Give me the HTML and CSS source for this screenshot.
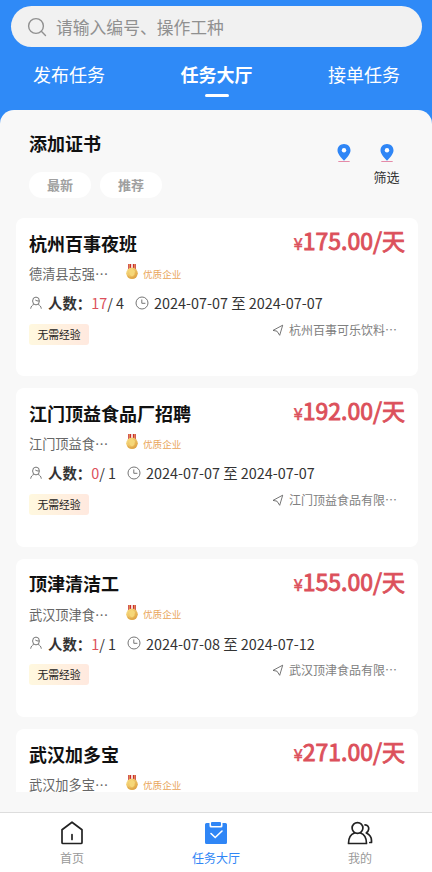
FILE: index.html
```html
<!DOCTYPE html>
<html lang="zh-CN">
<head>
<meta charset="utf-8">
<meta name="viewport" content="width=device-width, initial-scale=1">
<title>任务大厅</title>
<link rel="stylesheet" href="styles.css">
</head>
<body>
<svg class="sprite" aria-hidden="true">
  <linearGradient id="gold" x1="0" y1="0" x2="1" y2="1"><stop offset="0" stop-color="#fbe48c"/><stop offset="1" stop-color="#dc9a35"/></linearGradient>
  <symbol id="pin" viewBox="0 0 16 20"><path d="M8 1C4.200 1 1.500 3.800 1.500 7.300 1.500 11 5 14.500 8 17.700 11 14.500 14.500 11 14.500 7.300 14.500 3.800 11.800 1 8 1Z" fill="#2f86f6"/><circle cx="8" cy="7.200" r="2.200" fill="#fff"/><path d="M2.300 18.500H13.700" stroke="#e58ba8" stroke-width="1"/></symbol>
  <symbol id="medal" viewBox="0 0 14 18"><path d="M3.200 1H6.200V6.500H3.200ZM7.800 1H10.800V6.500H7.800Z" fill="#c9302c"/><path d="M4.400 1H5V6H4.400ZM9 1H9.600V6H9Z" fill="#f3c267"/><circle cx="7" cy="10.300" r="5.800" fill="url(#gold)"/><path d="M4 8 7 5.500 10 8 9.300 12 7 13.500 4.700 12Z" fill="#f6d778"/><path d="M2.500 13Q7 17.200 11.500 13" fill="none" stroke="#dfa54a" stroke-width="1"/></symbol>
  <symbol id="person" viewBox="0 0 14 14"><g fill="none" stroke="#666" stroke-width=".9"><ellipse cx="7" cy="5" rx="3.400" ry="3.900"/><path d="M4.800 8.500C3 9.200 2 10.500 1.700 12.700M9.200 8.500C11 9.200 12 10.500 12.300 12.700M6.300 4Q7.800 5.200 10 5"/></g></symbol>
  <symbol id="clock" viewBox="0 0 14 14"><g fill="none" stroke="#666" stroke-width=".9"><circle cx="7" cy="7" r="6"/><path d="M6.800 3.500V7.300H10.400"/></g></symbol>
  <symbol id="send" viewBox="0 0 12 12"><path d="M10.700 1.200 1 6.400 5 7.200 7.700 11.300Z" fill="none" stroke="#666" stroke-width=".9" stroke-linejoin="round"/></symbol>
</svg>
<div class="app">
  <header class="header">
    <div class="search">
      <svg class="search-icon" viewBox="0 0 20 20"><g fill="none" stroke="#909090" stroke-width="1.400" stroke-linecap="round"><circle cx="9" cy="9" r="7.400"/><path d="M14.300 14.300 18.500 18.500"/></g></svg>
      <span>请输入编号、操作工种</span>
    </div>
    <nav class="tabs">
      <a class="tab">发布任务</a><a class="tab current">任务大厅</a><a class="tab">接单任务</a>
    </nav>
  </header>
  <main class="panel">
    <section class="filters">
      <div>
        <h1 class="heading">添加证书</h1>
        <div class="chips"><span class="chip">最新</span><span class="chip">推荐</span></div>
      </div>
      <div class="tools">
        <div class="tool"><svg class="pin"><use href="#pin"/></svg></div>
        <div class="tool"><svg class="pin"><use href="#pin"/></svg><span>筛选</span></div>
      </div>
    </section>
    <section class="list">
      <article class="card">
        <div class="top"><h2 class="title">杭州百事夜班</h2><div class="price"><small>¥</small>175.00/天</div></div>
        <div class="company"><span class="name">德清县志强⋯</span><svg class="medal"><use href="#medal"/></svg><span class="quality">优质企业</span></div>
        <div class="info"><svg class="mini"><use href="#person"/></svg><b>人数：</b><span class="count">17</span><span>/ 4</span><svg class="mini clock"><use href="#clock"/></svg><span>2024-07-07 至 2024-07-07</span></div>
        <div class="bottom"><span class="tag">无需经验</span><span class="place"><svg class="send"><use href="#send"/></svg>杭州百事可乐饮料⋯</span></div>
      </article>
      <article class="card">
        <div class="top"><h2 class="title">江门顶益食品厂招聘</h2><div class="price"><small>¥</small>192.00/天</div></div>
        <div class="company"><span class="name">江门顶益食⋯</span><svg class="medal"><use href="#medal"/></svg><span class="quality">优质企业</span></div>
        <div class="info"><svg class="mini"><use href="#person"/></svg><b>人数：</b><span class="count">0</span><span>/ 1</span><svg class="mini clock"><use href="#clock"/></svg><span>2024-07-07 至 2024-07-07</span></div>
        <div class="bottom"><span class="tag">无需经验</span><span class="place"><svg class="send"><use href="#send"/></svg>江门顶益食品有限⋯</span></div>
      </article>
      <article class="card">
        <div class="top"><h2 class="title">顶津清洁工</h2><div class="price"><small>¥</small>155.00/天</div></div>
        <div class="company"><span class="name">武汉顶津食⋯</span><svg class="medal"><use href="#medal"/></svg><span class="quality">优质企业</span></div>
        <div class="info"><svg class="mini"><use href="#person"/></svg><b>人数：</b><span class="count">1</span><span>/ 1</span><svg class="mini clock"><use href="#clock"/></svg><span>2024-07-08 至 2024-07-12</span></div>
        <div class="bottom"><span class="tag">无需经验</span><span class="place"><svg class="send"><use href="#send"/></svg>武汉顶津食品有限⋯</span></div>
      </article>
      <article class="card">
        <div class="top"><h2 class="title">武汉加多宝</h2><div class="price"><small>¥</small>271.00/天</div></div>
        <div class="company"><span class="name">武汉加多宝⋯</span><svg class="medal"><use href="#medal"/></svg><span class="quality">优质企业</span></div>
      </article>
    </section>
  </main>
  <footer class="tabbar">
    <a class="item"><svg class="nav-icon" viewBox="0 0 26 26"><path d="M3 9.800 13 2.200 23 9.800V22.500Q23 23.500 22 23.500H4Q3 23.500 3 22.500ZM13 14.500V19.500" fill="none" stroke="#222" stroke-width="1.700" stroke-linejoin="round" stroke-linecap="round"/></svg><span>首页</span></a>
    <a class="item active"><svg class="nav-icon" viewBox="0 0 26 26"><path d="M3.500 3H6.500V6Q6.500 7.500 8 7.500H18Q19.500 7.500 19.500 6V3H22.500Q24 3 24 4.500V22.500Q24 24 22.500 24H3.500Q2 24 2 22.500V4.500Q2 3 3.500 3Z" fill="#2f86f6"/><rect x="8" y="2" width="10" height="4" rx="1" fill="#2f86f6"/><path d="M8 13.500 12.200 17.500 19 11" fill="none" stroke="#fff" stroke-width="1.600" stroke-linecap="round"/></svg><span>任务大厅</span></a>
    <a class="item"><svg class="nav-icon" viewBox="0 0 26 26"><g fill="none" stroke="#222" stroke-width="1.700" stroke-linecap="round" stroke-linejoin="round"><circle cx="10.500" cy="8" r="5.400"/><path d="M7.500 13C3.500 14.300 1.500 17.500 1.500 23.500H19.500C19.500 17.500 17.500 14.300 13.500 13M18 4.800C20.700 5 22 7 21.700 9.200 21.500 11 20.500 12 19.300 13 22.500 14.500 24.500 17.500 24.500 20.500V22.500H22.800"/></g></svg><span>我的</span></a>
  </footer>
</div>
</body>
</html>
```
FILE: styles.css
```css
* { box-sizing: border-box; }
body { margin: 0; background: #f8f8f8; font-family: "Noto Sans CJK SC", sans-serif; color: #333; }
svg { display: block; flex: none; }
h1, h2 { margin: 0; }
.sprite { position: absolute; width: 0; height: 0; }
.app { height: 872px; display: flex; flex-direction: column; overflow: hidden; background: #2f8af7; }
.header { height: 110px; flex: none; padding: 6px 10px 0 11px; }
.search { height: 41px; border-radius: 21px; background: #f1f1f1; display: flex; align-items: center; padding-left: 16px; font-size: 16.800px; color: #909090; white-space: nowrap; }
.search-icon { width: 20px; height: 20px; margin-right: 9px; }
.tabs { display: flex; justify-content: space-between; margin: 13px 22px 0; color: #fff; font-size: 18px; line-height: 28px; }
.tab { display: flex; flex-direction: column; align-items: center; }
.current { font-weight: 700; }
.current::after { content: ""; width: 24px; height: 3px; margin-top: 6px; border-radius: 2px; background: #fff; }
.panel { flex: 1; min-height: 0; display: flex; flex-direction: column; background: #f8f8f8; border-radius: 14px 14px 0 0; padding: 0 14px 20px 16px; }
.filters { height: 108px; flex: none; display: flex; justify-content: space-between; padding: 19px 13px 0; }
.heading { font-size: 18px; line-height: 28px; font-weight: 700; color: #111; }
.chips { display: flex; gap: 9px; margin-top: 15px; }
.chip { width: 62px; height: 26px; border-radius: 13px; background: #fff; color: #a0a0a0; font-size: 13px; font-weight: 700; line-height: 26px; text-align: center; }
.tools { display: flex; gap: 16px; padding: 14px 5px 0 0; }
.tool { width: 27px; display: flex; flex-direction: column; align-items: center; font-size: 13px; line-height: 20px; white-space: nowrap; }
.pin { width: 16px; height: 20px; margin-bottom: 4px; }
.list { flex: 1; min-height: 0; overflow: hidden; display: flex; flex-direction: column; gap: 12px; }
.card { height: 158.400px; flex: none; background: #fff; border-radius: 8px; padding: 7.500px 13px 0; }
.top { height: 34px; display: flex; justify-content: space-between; align-items: center; }
.title { font-size: 18px; line-height: 34px; font-weight: 700; color: #111; }
.price { font-size: 23px; line-height: 30px; font-weight: 400; -webkit-text-stroke: .9px #dc505b; color: #dc505b; white-space: nowrap; padding-bottom: 2px; }
.price small { font-size: 16px; -webkit-text-stroke-width: .6px; }
.company { height: 28px; display: flex; align-items: center; }
.name { width: 96px; font-size: 13.200px; color: #666; }
.medal { width: 14px; height: 18px; margin-right: 4px; margin-top: -3px; }
.quality { font-size: 9.600px; color: #e9a65a; }
.info { height: 30px; display: flex; align-items: center; font-size: 14.400px; white-space: pre; }
.mini { width: 14px; height: 14px; margin-right: 5px; }
.count { color: #dc505b; }
.clock { margin-left: 11px; margin-right: 5px; }
.bottom { display: flex; justify-content: space-between; align-items: flex-start; padding-right: 8px; }
.tag { width: 60px; height: 21px; margin-top: 6px; border-radius: 3px; background: linear-gradient(90deg, #fff8df, #ffe9df); font-size: 10.800px; line-height: 21px; text-align: center; color: #222; }
.place { display: flex; align-items: center; font-size: 12px; line-height: 22px; margin-top: 1px; color: #808080; }
.send { width: 12px; height: 12px; margin-right: 5px; }
.tabbar { height: 60px; flex: none; border-top: 1px solid #ddd; background: #fff; display: flex; }
.item { flex: 1; display: flex; flex-direction: column; align-items: center; padding-top: 7px; font-size: 12px; line-height: 18px; color: #999; }
.nav-icon { width: 26px; height: 26px; margin-bottom: 3px; }
.active { color: #2f86f6; }
```
